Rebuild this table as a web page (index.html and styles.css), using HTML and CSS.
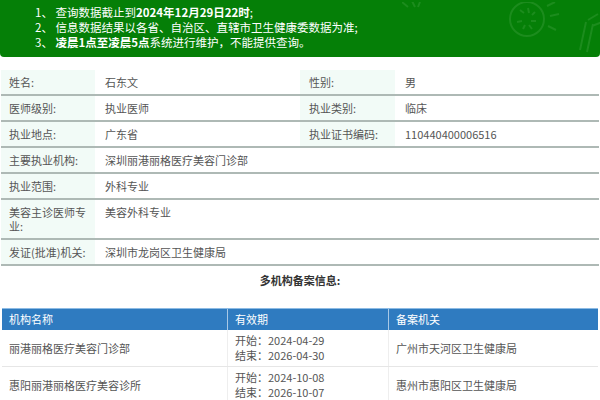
FILE: index.html
```html
<!DOCTYPE html>
<html lang="zh">
<head>
<meta charset="utf-8">
<link rel="stylesheet" href="styles.css">
</head>
<body>
<div class="notice">
  <ol class="notice-list">
    <li>1、 查询数据截止到<b>2024年12月29日22时</b>;</li>
    <li>2、 信息数据结果以各省、自治区、直辖市卫生健康委数据为准;</li>
    <li>3、 <b>凌晨1点至凌晨5点</b>系统进行维护，不能提供查询。</li>
  </ol>
  <svg class="deco" width="210" height="57" viewBox="0 0 210 57" fill="none" stroke="#1c8c1d" stroke-width="2">
    <path d="M0 0 l6 5 M10 -1 l3 6 M18 0 l-2 5"/>
    <circle cx="125" cy="17" r="17"/>
    <path d="M118 8 l4 3 M126 6 l1 5 M133 10 l-3 3 M134 19 l-5 0 M130 27 l-3 -4 M121 27 l2 -4 M115 20 l5 -1"/>
    <path d="M145 4 l8 -4 M148 14 l9 -2 M146 24 l8 4"/>
    <path d="M178 48 l6 -28 M185 50 l6 -28 M186 18 l10 -6 M190 24 l10 -4"/>
    <circle cx="202" cy="50" r="2"/>
  </svg>
</div>

<div class="info">
  <div class="row">
    <div class="lbl">姓名:</div><div class="val">石东文</div>
    <div class="lbl">性别:</div><div class="val">男</div>
  </div>
  <div class="row">
    <div class="lbl">医师级别:</div><div class="val">执业医师</div>
    <div class="lbl">执业类别:</div><div class="val">临床</div>
  </div>
  <div class="row">
    <div class="lbl">执业地点:</div><div class="val">广东省</div>
    <div class="lbl">执业证书编码:</div><div class="val">110440400006516</div>
  </div>
  <div class="row wide">
    <div class="lbl">主要执业机构:</div><div class="val">深圳丽港丽格医疗美容门诊部</div>
  </div>
  <div class="row wide">
    <div class="lbl">执业范围:</div><div class="val">外科专业</div>
  </div>
  <div class="row wide">
    <div class="lbl">美容主诊医师专业:</div><div class="val">美容外科专业</div>
  </div>
  <div class="row wide">
    <div class="lbl">发证(批准)机关:</div><div class="val">深圳市龙岗区卫生健康局</div>
  </div>
</div>

<div class="multi-title">多机构备案信息:</div>

<div class="multi">
  <div class="mrow head">
    <div class="mc">机构名称</div><div class="mc">有效期</div><div class="mc">备案机关</div>
  </div>
  <div class="mrow">
    <div class="mc">丽港丽格医疗美容门诊部</div>
    <div class="mc dates"><span>开始：2024-04-29</span><span>结束：2026-04-30</span></div>
    <div class="mc">广州市天河区卫生健康局</div>
  </div>
  <div class="mrow">
    <div class="mc">惠阳丽港丽格医疗美容诊所</div>
    <div class="mc dates"><span>开始：2024-10-08</span><span>结束：2026-10-07</span></div>
    <div class="mc">惠州市惠阳区卫生健康局</div>
  </div>
</div>
</body>
</html>
```

FILE: styles.css
```css
* { box-sizing: border-box; }
html, body { margin: 0; padding: 0; background: #fff; }
body {
  width: 600px;
  height: 400px;
  overflow: hidden;
  font-family: "Noto Sans CJK SC", "Noto Sans", sans-serif;
  font-size: 11px;
  color: #555;
}
.notice {
  position: relative;
  height: 57px;
  background: #057f07;
  border-radius: 0 0 4px 4px;
  overflow: hidden;
  color: #fff;
}
.notice-list {
  list-style: none;
  margin: 0;
  padding: 5px 0 0 35px;
  font-size: 11.5px;
  line-height: 15px;
}
.notice-list b { font-weight: bold; }
.deco {
  position: absolute;
  right: -12px;
  top: 2px;
}
.info {
  margin-top: 13px;
  padding: 0 1px;
}
.row {
  display: grid;
  grid-template-columns: 94px 205px 95px 1fr;
  border-bottom: 2px solid #aeb9b5;
}
.row.wide { grid-template-columns: 94px 1fr; }
.lbl {
  background: #f2fbf7;
  padding: 5px 8px;
  line-height: 14px;
  min-height: 24px;
  min-width: 0;
  word-break: break-all;
}
.val {
  padding: 5px 10px;
  line-height: 14px;
  min-width: 0;
}
.row .lbl:nth-child(3) { padding-left: 9px; }
.multi-title {
  text-align: center;
  font-weight: bold;
  color: #333;
  padding: 7px 0 0;
  height: 42px;
  line-height: 14px;
}
.multi {
  margin: 0 2px;
}
.mrow {
  display: grid;
  grid-template-columns: 226px 161px 1fr;
  border-bottom: 1px solid #e6e6e6;
}
.mrow.head {
  background: #2f7bc0;
  color: #fff;
  border-bottom: none;
  border-top: 1px solid #8dbbe4;
}
.mc {
  padding: 0 7px;
  min-height: 36px;
  display: flex;
  align-items: center;
  border-right: 1px solid #eee;
  line-height: 15px;
}
.mc:last-child { border-right: none; }
.head .mc {
  min-height: 21px;
  border-right: 1px solid #a8c8e6;
}
.head .mc:last-child { border-right: none; }
.dates {
  flex-direction: column;
  align-items: flex-start;
  justify-content: center;
}
```
